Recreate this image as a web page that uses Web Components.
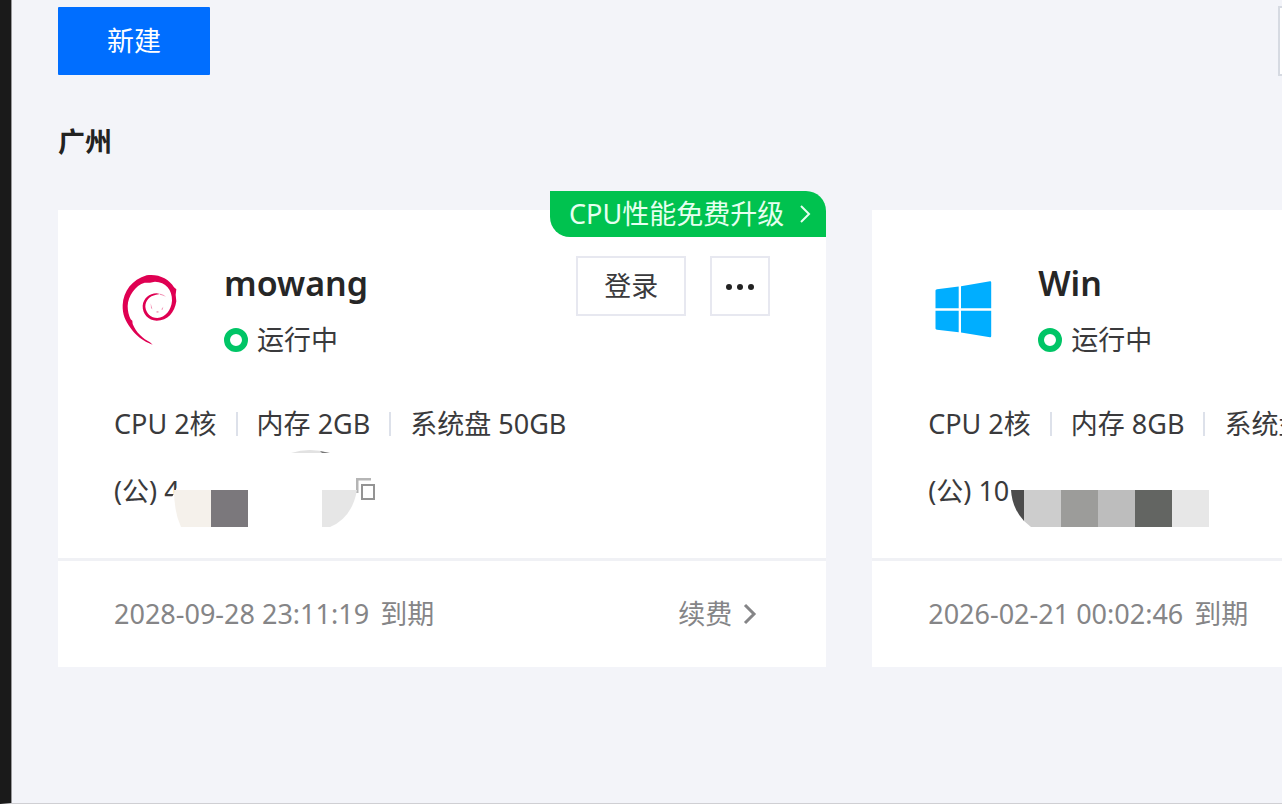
<!DOCTYPE html>
<html lang="zh-CN">
<head>
<meta charset="utf-8">
<meta name="viewport" content="width=device-width, initial-scale=1">
<title>实例列表</title>
<style>
body { margin: 0; overflow: hidden; background: #f3f4f9; color: #3a3a3c; font-family: "Noto Sans", "Noto Sans CJK SC", sans-serif; font-size: 27px; line-height: 36px; }
</style>
</head>
<body>
<server-console>
  <tool-bar slot="toolbar"></tool-bar>
  <region-group name="广州">
    <server-card name="mowang" memory="2GB" disk="50GB" expires="2028-09-28 23:11:19" promo="CPU性能免费升级">
      <os-debian slot="icon"></os-debian>
      <masked-address slot="address" prefix="4" pattern="a"></masked-address>
      <copy-button slot="address"></copy-button>
    </server-card>
    <server-card name="Win" memory="8GB" disk="100GB" expires="2026-02-21 00:02:46">
      <os-windows slot="icon"></os-windows>
      <masked-address slot="address" prefix="10" pattern="b"></masked-address>
    </server-card>
  </region-group>
</server-console>
<script>
class BaseElement extends HTMLElement {
  connectedCallback() {
    if (!this.shadowRoot) this.attachShadow({ mode: "open" }).innerHTML = this.render();
  }
  attr(name) { return this.getAttribute(name) || ""; }
}

customElements.define("server-console", class extends BaseElement {
  render() { return `
    <style>
      :host { display: block; box-sizing: border-box; min-height: 100vh; border-left: 11px solid #1a1a1a; border-bottom: 1px solid #cfcfd3; box-shadow: inset 1px 0 #98989b; padding: 6px 0 40px 47px; overflow: hidden; }
    </style>
    <slot name="toolbar"></slot><main><slot></slot></main>`; }
});

customElements.define("tool-bar", class extends BaseElement {
  render() { return `
    <style>
      :host { display: flex; justify-content: space-between; align-items: center; }
      button { width: 152px; height: 68px; border: 0; border-radius: 1px; background: #006eff; color: #fff; font: inherit; padding: 0; }
      input { box-sizing: border-box; width: 320px; height: 70px; margin: 0 -316px 0 0; border: 2px solid #d6dae2; background: #fff; font: inherit; flex: none; }
    </style>
    <button type="button">新建</button>
    <input type="search" aria-label="搜索实例">`; }
});

customElements.define("region-group", class extends BaseElement {
  render() { return `
    <style>
      :host { display: block; padding-top: 48px; }
      h2 { margin: 0 0 50px; font-size: 27px; line-height: 36px; font-weight: 700; color: #222; }
      .cards { display: grid; grid-auto-flow: column; grid-auto-columns: calc(60vw - 1px); gap: 46px; }
    </style>
    <h2>${this.attr("name")}</h2>
    <div class="cards"><slot></slot></div>`; }
});

customElements.define("server-card", class extends BaseElement {
  render() {
    const promo = this.attr("promo");
    return `
    <style>
      :host { display: block; position: relative; background: #fff; }
      .body { padding: 46px 56px 49px; }
      header { display: flex; align-items: flex-start; gap: 32px; }
      .title { flex: 1; padding-top: 5px; }
      h3 { margin: 0 0 17px; font-size: 34px; line-height: 44px; font-weight: 600; color: #262626; }
      .status { display: flex; align-items: center; gap: 9px; }
      .status i { box-sizing: border-box; width: 24px; height: 24px; border: 6px solid #00c566; border-radius: 50%; }
      .actions { display: flex; gap: 24px; }
      .actions button { box-sizing: border-box; height: 60px; padding: 0 26px; border: 2px solid #e7e8f0; background: #fff; color: inherit; font: inherit; }
      .actions .more { width: 60px; padding: 0; display: grid; place-items: center; }
      ul { display: flex; align-items: center; list-style: none; margin: 48px 0 31px; padding: 0; white-space: nowrap; }
      li + li::before { content: ""; display: inline-block; width: 2px; height: 24px; margin: 0 19px; background: #dde1ea; vertical-align: -2px; }
      .address { display: flex; }
      footer { display: flex; justify-content: space-between; padding: 35px 56px; border-top: 3px solid #f0f1f5; color: #858587; white-space: nowrap; }
      time { margin-right: 4px; }
      footer a { display: flex; align-items: center; gap: 6px; padding-right: 8px; color: inherit; text-decoration: none; }
      .promo { position: absolute; top: -19px; right: 0; box-sizing: border-box; height: 46px; display: flex; align-items: center; gap: 8px; padding: 0 10px 0 19px; border-radius: 0 20px 0 20px; background: #00c24f; color: #e6fff0; text-decoration: none; }
      svg { display: block; }
    </style>
    ${promo ? `<a class="promo" href="#upgrade">${promo}<svg width="24" height="24" fill="none" stroke="currentColor" stroke-width="2"><path d="m9 4 8 8-8 8"/></svg></a>` : ""}
    <div class="body">
      <header>
        <slot name="icon"></slot>
        <div class="title"><h3>${this.attr("name")}</h3><div class="status"><i></i><span>运行中</span></div></div>
        <div class="actions">
          <button type="button">登录</button>
          <button type="button" class="more" aria-label="更多"><svg width="32" height="8" fill="#222"><circle cx="5" cy="5" r="3"/><circle cx="16" cy="5" r="3"/><circle cx="27" cy="5" r="3"/></svg></button>
        </div>
      </header>
      <ul><li>CPU 2核</li><li>内存 ${this.attr("memory")}</li><li>系统盘 ${this.attr("disk")}</li></ul>
      <div class="address"><slot name="address"></slot></div>
    </div>
    <footer><span><time>${this.attr("expires")}</time> 到期</span><a href="#renew">续费<svg width="24" height="24" fill="none" stroke="currentColor" stroke-width="3"><path d="m7 3 9 9-9 9"/></svg></a></footer>`;
  }
});

customElements.define("os-debian", class extends BaseElement {
  render() { return `
    <style>:host { display: block; padding-top: 6px; } svg { display: block; }</style>
    <svg width="78" height="96" viewBox="42 36 234 288" aria-hidden="true" fill="#df0052">
      <path d="M158 284C130 276 105 254 90 232C76 212 67 193 68 165C70 125 96 88 140 76C175 71 206 86 222 112L229 118L227 134L229 154C224 188 203 212 170 212C145 211 127 192 128 167C130 146 148 130 170 130L180 132L168 134C148 138 136 152 136 170C138 190 153 204 172 204C196 202 214 180 216 152C217 120 197 95 165 95L150 98L134 98C106 106 84 138 83 168C83 182 86 196 92 208L97 212L98 222C108 248 130 266 150 277Z"/>
      <path d="M180 131Q190 132 198 140Q188 136 180 134zM152 160l5 18 6 6-10-10zM170 183l8 3-8 2zM184 178l6-8-3 10zM140 190l14 11-16-6z" opacity=".5"/>
    </svg>`; }
});

customElements.define("os-windows", class extends BaseElement {
  render() { return `
    <style>:host { display: block; padding-top: 6px; } svg { display: block; }</style>
    <svg width="78" height="96" viewBox="0 0 78 96" aria-hidden="true" fill="#00aeff">
      <path d="M7.500 28.500Q7.500 27.500 9 27.200L30.700 24.500V46.300H7.500zM33 24.200 62 19.300Q63.200 19 63.200 20.500V46.300H33zM7.500 48.700H30.700V70.300L9 67.800Q7.500 67.600 7.500 66.500zM33 48.700H63.200V74Q63.200 75.500 62 75.200L33 70.600z"/>
    </svg>`; }
});

customElements.define("masked-address", class extends BaseElement {
  render() {
    const patterns = {
      a: `<path d="M67 34 57 53H58V60H240V34z" fill="#fff"/>
          <path d="M60 44H97V81H67Q60 66 60 44z" fill="#f5f1eb"/><path d="M97 44h37v37H97z" fill="#7b787c"/>
          <path d="M208 44h35q-5 28-27 37h-8z" fill="#e6e6e6"/>
          <path d="M177 7q19-6 38 0z" fill="#e2e2e2"/><path d="M206 5l10 2h-8z" fill="#777"/>`,
      b: `<path d="M83 44H96V75Q84 62 83 44z" fill="#4c4c4c"/><path d="M96 44h37v37H103l-7-6z" fill="#cdcdcd"/>
          <path d="M133 44h37v37h-37z" fill="#9c9c9a"/><path d="M170 44h37v37h-37z" fill="#bdbdbd"/>
          <path d="M207 44h37v37h-37z" fill="#636562"/><path d="M244 44h37v37h-37z" fill="#e7e7e7"/>`
    };
    return `
    <style>
      :host { display: block; position: relative; width: 242px; height: 36px; white-space: nowrap; }
      svg { position: absolute; left: 0; top: -27px; }
    </style>
    <span>(公) ${this.attr("prefix")}</span>
    <svg width="300" height="90" viewBox="0 0 300 90" aria-hidden="true">${patterns[this.attr("pattern")]}</svg>`;
  }
});

customElements.define("copy-button", class extends BaseElement {
  render() { return `
    <style>
      :host { display: block; }
      button { display: block; border: 0; padding: 5px 0; background: none; color: #949494; }
      svg { display: block; }
    </style>
    <button type="button" aria-label="复制地址"><svg width="20" height="24" fill="none" stroke="currentColor"><path d="M15 1H1V15" stroke="#b5b5b5" stroke-width="3"/><path d="M6 7H18V21H6z" stroke-width="2"/></svg></button>`; }
});
</script>
</body>
</html>
